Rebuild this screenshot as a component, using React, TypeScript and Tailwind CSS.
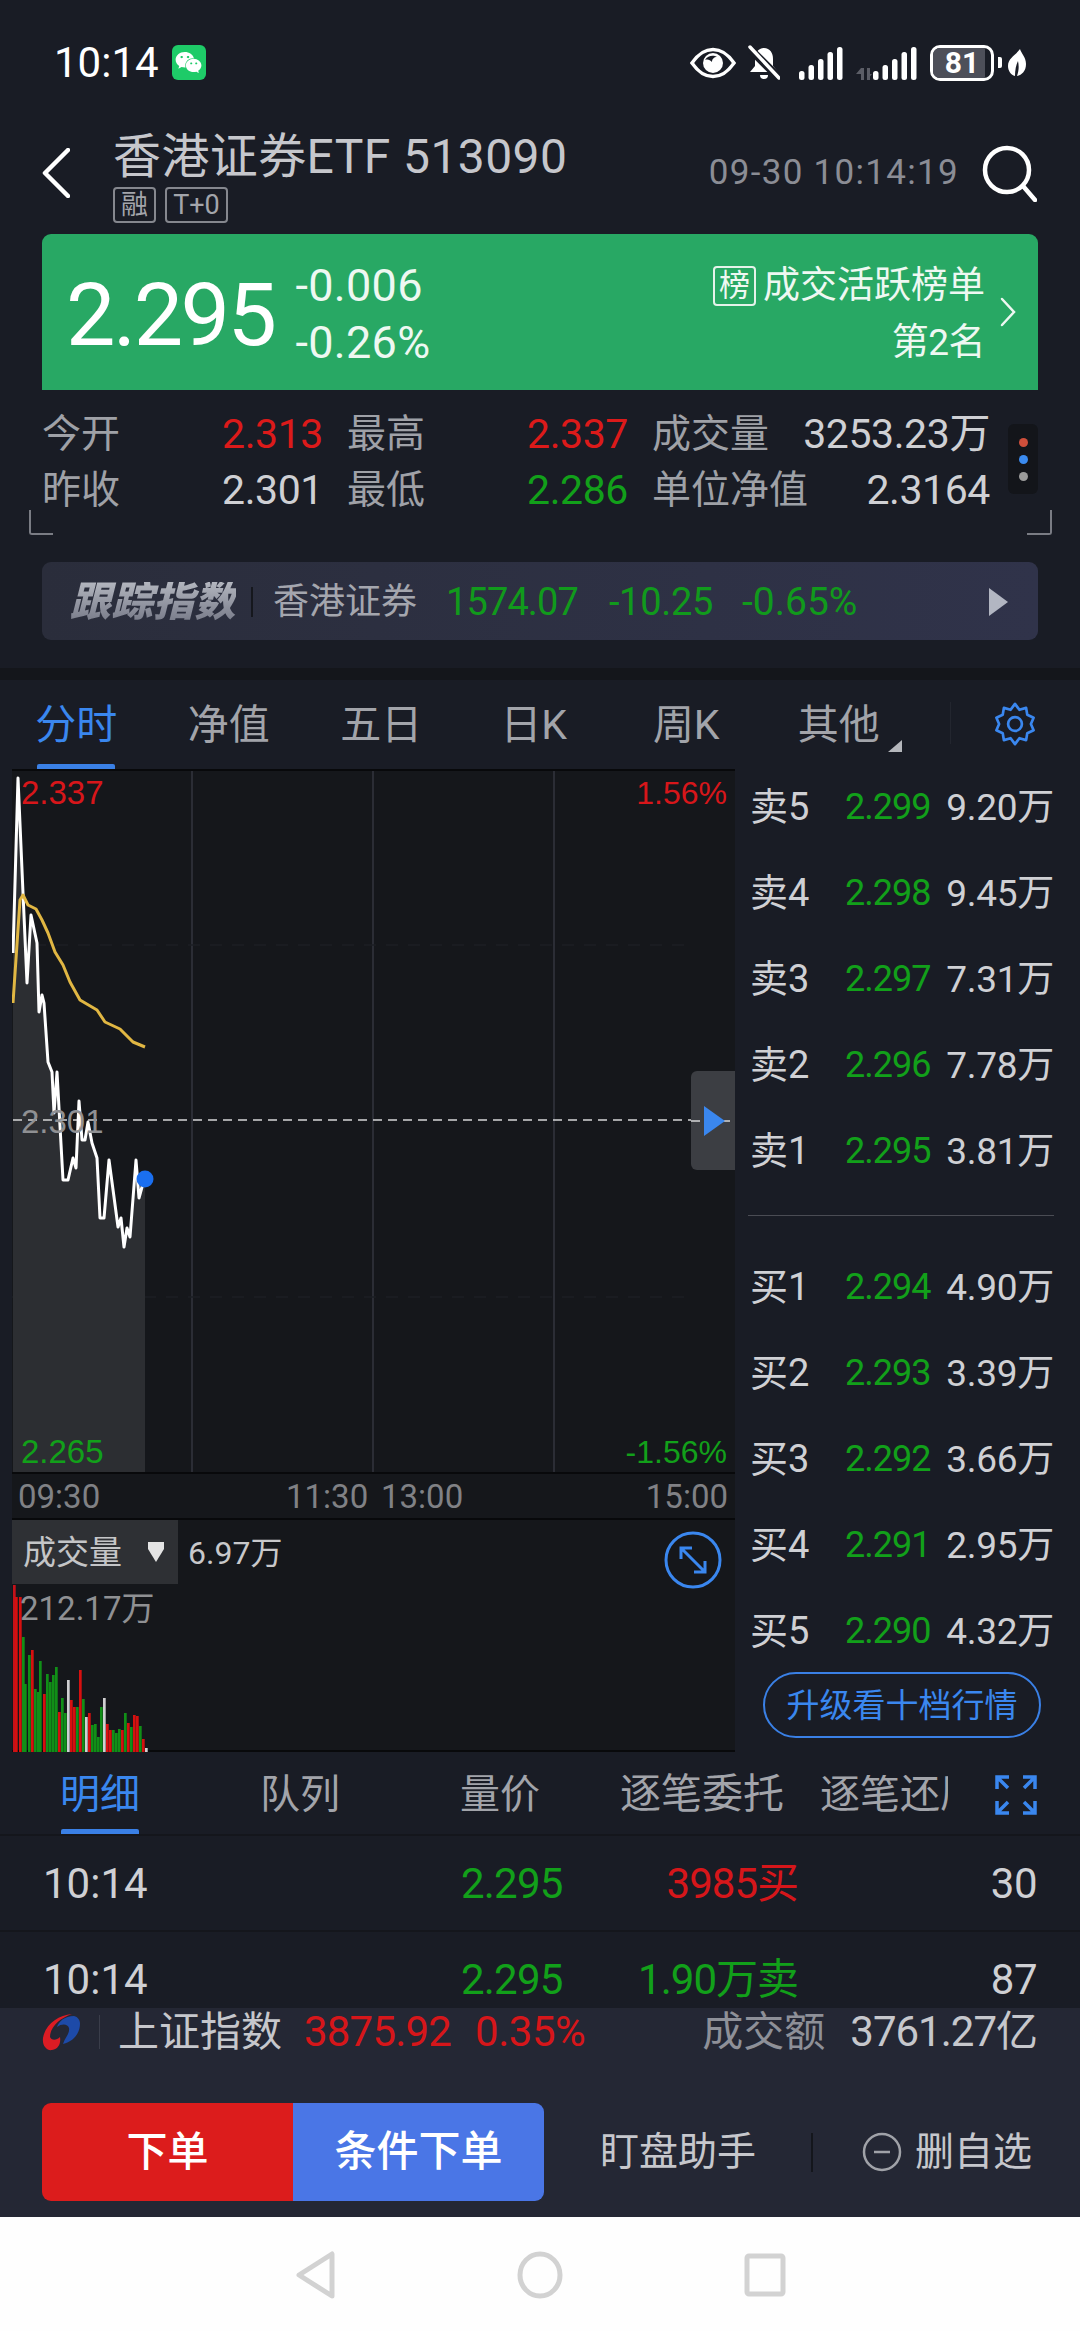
import React from 'react';
import { FaWeixin } from 'react-icons/fa';

// --- data ---
const sells = [
  ['卖5', '2.299', '9.20万'],
  ['卖4', '2.298', '9.45万'],
  ['卖3', '2.297', '7.31万'],
  ['卖2', '2.296', '7.78万'],
  ['卖1', '2.295', '3.81万'],
];
const buys = [
  ['买1', '2.294', '4.90万'],
  ['买2', '2.293', '3.39万'],
  ['买3', '2.292', '3.66万'],
  ['买4', '2.291', '2.95万'],
  ['买5', '2.290', '4.32万'],
];
const topTabs = ['分时', '净值', '五日', '日K', '周K', '其他'];

const whiteLine =
  '13,953 18,778 23,893 27,983 31,915 37,943 39,1012 42,995 44,1003 48,1062 52,1072 54,1113 57,1072 63,1180 68,1180 73,1158 76,1168 79,1101 82,1140 85,1140 88,1122 92,1143 97,1158 100,1218 104,1218 109,1160 114,1197 118,1227 121,1218 124,1247 127,1228 130,1237 136,1160 139,1198 142,1187 145,1179';
const yellowLine =
  '13,1003 20,900 23,895 28,905 36,909 42,920 48,933 55,952 63,965 70,982 80,1000 97,1010 105,1022 120,1029 133,1042 145,1047';

const G = '#e0e0e0';
// x, top of the bar (page px), colour
const bars: [number, number, string][] = [
  [13, 1583, '#c4121a'], [15, 1595, '#d6100f'], [19, 1595, '#d6100f'], [22, 1635, '#118f17'], [24, 1682, '#118f17'],
  [28, 1653, '#118f17'], [31, 1648, '#d6100f'], [34, 1687, '#118f17'], [37, 1690, '#118f17'], [39, 1659, '#118f17'],
  [43, 1692, '#d6100f'], [46, 1672, '#118f17'], [49, 1680, '#118f17'], [52, 1673, '#118f17'], [55, 1665, '#118f17'],
  [58, 1710, '#d6100f'], [61, 1696, '#118f17'], [64, 1711, '#118f17'], [67, 1678, G], [70, 1698, '#d6100f'],
  [73, 1705, '#d6100f'], [76, 1705, '#118f17'], [79, 1668, '#d6100f'], [82, 1697, '#118f17'], [85, 1715, G],
  [88, 1711, '#d6100f'], [91, 1723, '#118f17'], [94, 1722, '#118f17'], [97, 1735, '#118f17'], [100, 1705, '#118f17'],
  [103, 1696, G], [106, 1722, '#d6100f'], [109, 1728, '#d6100f'], [112, 1728, '#118f17'], [115, 1731, '#118f17'],
  [118, 1727, '#118f17'], [121, 1728, '#d6100f'], [124, 1711, '#118f17'], [127, 1721, '#d6100f'], [130, 1725, '#118f17'],
  [133, 1713, '#d6100f'], [136, 1714, '#d6100f'], [139, 1724, '#118f17'], [142, 1737, '#d6100f'], [145, 1746, G],
];

// --- status bar ---
function SignalBars({ withData }: { withData?: boolean }) {
  const heights = [9, 15, 21, 28, 33];
  return (
    <svg width={withData ? 62 : 44} height="34" viewBox={withData ? '-18 0 62 34' : '0 0 44 34'}>
      {withData && (
        <g fill="#5b5d66">
          <rect x="-12" y="22" width="3" height="12" />
          <path d="M-12 22l-5 6h5zM-6 34l5-6h-5z" />
          <rect x="-6" y="22" width="3" height="12" />
        </g>
      )}
      {heights.map((h, i) => (
        <rect key={i} x={i * 9.5} y={34 - h} width="5.5" height={h} rx="2.5" fill="#fff" />
      ))}
    </svg>
  );
}

function StatusBar() {
  return (
    <div className="h-[122px] flex items-center pl-[54px] pt-[3px]">
      <span className="text-[42px] leading-none text-white">10:14</span>
      <div className="ml-[13px] w-[34px] h-[35px] rounded-[6px] bg-[#1ecb68] flex items-center justify-center">
        <FaWeixin className="text-white text-[27px]" />
      </div>
      <div className="ml-auto mr-[54px] flex items-center">
        {/* eye */}
        <svg width="46" height="32" viewBox="0 0 46 32" fill="none">
          <path d="M2 16C9 6 15 2.500 23 2.500S37 6 44 16C37 26 31 29.500 23 29.500S9 26 2 16z" stroke="#fff" strokeWidth="3.500" />
          <circle cx="23" cy="16" r="10" fill="#fff" />
          <path d="M15 13c3-5 9-5 12-3-3 0-5 2-5 5-2-2-4-3-7-2z" fill="#191c25" />
        </svg>
        {/* muted bell */}
        <svg className="ml-[12px]" width="32" height="36" viewBox="0 0 32 36">
          <path d="M16 3c-6 0-9 5-9 11v7l-5 6h28l-5-6v-7c0-6-3-11-9-11z" fill="#fff" />
          <path d="M12 30a4 4 0 0 0 8 0z" fill="#fff" />
          <path d="M1 3l30 30" stroke="#191c25" strokeWidth="8" />
          <path d="M2 2l29 31" stroke="#fff" strokeWidth="3.500" strokeLinecap="round" />
        </svg>
        <div className="ml-[19px]"><SignalBars /></div>
        <div className="ml-[12px]"><SignalBars withData /></div>
        {/* battery */}
        <div className="ml-[13px] relative w-[64px] h-[36px] rounded-[10px] border-[3px] border-white overflow-hidden">
          <div className="h-full w-[52px] bg-[#4d4f59]" />
          <span className="absolute inset-0 flex items-center justify-center text-[30px] leading-none font-bold text-white">81</span>
        </div>
        <div className="ml-[4px] w-[4px] h-[11px] rounded-r-[2px] bg-white" />
        <svg className="ml-[6px]" width="18" height="28" viewBox="0 0 18 28">
          <path d="M12 0c1 4 6 8 6 15 0 7-4 11-9 12 2-6 2-10 1-15-2 4-3 9-3 15C3 26 0 22 0 17 0 9 8 6 12 0z" fill="#fff" />
        </svg>
      </div>
    </div>
  );
}

// --- stock header ---
function Header() {
  return (
    <div className="h-[112px] flex pl-[42px] pr-[43px]">
      <svg className="mt-[26px]" width="28" height="50" viewBox="0 0 28 50" fill="none">
        <path d="M26 2L3 25l23 23" stroke="#fff" strokeWidth="4.500" strokeLinecap="round" strokeLinejoin="round" />
      </svg>
      <div className="ml-[43px] pt-[12px]">
        <div className="text-[48px] leading-[46px] text-[#c6c7cc] tracking-[0.4px] whitespace-nowrap">香港证券ETF 513090</div>
        <div className="mt-[7px] flex gap-[9px] text-[#a3a5ab]">
          <span className="w-[43px] h-[36px] border-2 border-[#85878e] rounded-[4px] flex items-center justify-center text-[27px] leading-none">融</span>
          <span className="w-[63px] h-[36px] border-2 border-[#85878e] rounded-[4px] flex items-center justify-center text-[27px] leading-none">T+0</span>
        </div>
      </div>
      <div className="ml-auto mt-[34px] h-[34px] text-[35px] leading-[34px] tracking-[1.300px] text-[#8b8d95] whitespace-nowrap">09-30 10:14:19</div>
      <svg className="ml-[22px] mt-[22px]" width="56" height="58" viewBox="0 0 56 58" fill="none">
        <circle cx="26" cy="26" r="22" stroke="#fff" strokeWidth="4.500" />
        <path d="M42 42l12 14" stroke="#fff" strokeWidth="4.500" strokeLinecap="round" />
      </svg>
    </div>
  );
}

function PriceBanner() {
  return (
    <div className="mx-[42px] h-[156px] bg-[#28a864] rounded-t-[9px] flex text-[#eef8f2]">
      <div className="ml-[24px] mt-[37px] text-[88px] leading-[87px] tracking-[-2.500px] text-white">2.295</div>
      <div className="ml-[21px] pt-[23px] text-[45px] leading-[57px] tracking-[0.3px]">
        <div>-0.006</div>
        <div>-0.26%</div>
      </div>
      <div className="ml-auto pt-[23px] text-[37px] leading-[57px] text-right">
        <div className="flex items-center">
          <span className="w-[43px] h-[40px] border-2 border-[#e5f3ea] rounded-[4px] flex items-center justify-center text-[31px] leading-none mr-[7px]">榜</span>
          成交活跃榜单
        </div>
        <div className="tracking-[-0.5px]">第2名</div>
      </div>
      <svg className="ml-[15px] mr-[21px] mt-[63px]" width="17" height="30" viewBox="0 0 17 30" fill="none">
        <path d="M2 2l12 13L2 28" stroke="#eef8f2" strokeWidth="2.500" strokeLinecap="round" />
      </svg>
    </div>
  );
}

function StatPair({ label, value, cls, w }: { label: string; value: string; cls: string; w: string }) {
  return (
    <div className={`flex justify-between items-center ${w}`}>
      <span className="text-[39px] leading-none text-[#9fa1a7]">{label}</span>
      <span className={`text-[41px] leading-none tracking-[-0.4px] ${cls}`}>{value}</span>
    </div>
  );
}

function Stats() {
  return (
    <div className="relative h-[172px] pl-[42px] pt-[16px]">
      <div className="flex gap-[24px] h-[56px]">
        <StatPair label="今开" value="2.313" cls="text-[#dc1a1a]" w="w-[281px]" />
        <StatPair label="最高" value="2.337" cls="text-[#dc1a1a]" w="w-[281px]" />
        <StatPair label="成交量" value="3253.23万" cls="text-[#cfd0d4]" w="w-[338px]" />
      </div>
      <div className="flex gap-[24px] h-[56px]">
        <StatPair label="昨收" value="2.301" cls="text-[#cfd0d4]" w="w-[281px]" />
        <StatPair label="最低" value="2.286" cls="text-[#12a01a]" w="w-[281px]" />
        <StatPair label="单位净值" value="2.3164" cls="text-[#cfd0d4]" w="w-[338px]" />
      </div>
      {/* page dots */}
      <div className="absolute left-[1008px] top-[34px] w-[30px] h-[70px] rounded-[6px] bg-[#13151a] flex flex-col items-center justify-center gap-[8px]">
        <span className="w-[9px] h-[9px] rounded-full bg-[#cf4f3b]" />
        <span className="w-[9px] h-[9px] rounded-full bg-[#3b8bf0]" />
        <span className="w-[9px] h-[9px] rounded-full bg-[#9b9b9b]" />
      </div>
      {/* fold corners */}
      <div className="absolute left-[29px] top-[120px] w-[24px] h-[25px] border-l-2 border-b-2 border-[#7a7c84] rounded-bl-[3px]" />
      <div className="absolute left-[1027px] top-[120px] w-[25px] h-[25px] border-r-2 border-b-2 border-[#7a7c84] rounded-br-[3px]" />
    </div>
  );
}

function TrackBar() {
  return (
    <div className="mx-[42px] h-[78px] rounded-[9px] bg-gradient-to-r from-[#2a2d3b] to-[#30334a] flex items-center pl-[28px] pt-[2px]">
      <span className="text-[41px] leading-none font-black italic tracking-[0.5px] bg-clip-text text-transparent bg-gradient-to-b from-[#b3b6bf] to-[#777a88] whitespace-nowrap">跟踪指数</span>
      <span className="ml-[15px] w-[2px] h-[30px] bg-[#15171d]" />
      <span className="ml-[20px] text-[36px] leading-none text-[#a4a6ae] whitespace-nowrap">香港证券</span>
      <span className="ml-[29px] text-[38px] leading-none tracking-[-0.9px] text-[#119a1c]">1574.07</span>
      <span className="ml-[31px] text-[38px] leading-none tracking-[-0.3px] text-[#119a1c]">-10.25</span>
      <span className="ml-[29px] text-[39px] leading-none text-[#119a1c]">-0.65%</span>
      <svg className="ml-auto mr-[30px]" width="19" height="28" viewBox="0 0 19 28">
        <path d="M0 0l19 14L0 28z" fill="#b2b6c2" />
      </svg>
    </div>
  );
}

function ChartTabs() {
  return (
    <div className="h-[89px] flex items-center relative">
      {topTabs.map((t, i) => (
        <div key={t} className={`w-[152.500px] text-center text-[41px] leading-none pt-[1px] ${i === 0 ? 'text-[#3a87ef]' : 'text-[#a2a4aa]'}`}>
          {t}
        </div>
      ))}
      <div className="absolute left-[37px] bottom-[0px] w-[78px] h-[5px] rounded-t-[2px] bg-[#3a80e6]" />
      <div className="absolute left-[888px] top-[60px] w-0 h-0 border-l-[14px] border-l-transparent border-b-[12px] border-b-[#b5b7bc]" />
      <span className="absolute left-[950px] top-[22px] w-[1px] h-[42px] bg-[#23262f]" />
      <svg className="absolute left-[992px] top-[20px]" width="46" height="48" viewBox="0 0 24 24" fill="none" stroke="#3a87ef" strokeWidth="1.400" strokeLinejoin="round">
        <path d="M12 1.500l2.300 3.100 3.500-1 .6 3.600 3.300 1.500-1.400 3.300 1.400 3.300-3.300 1.500-.6 3.600-3.500-1L12 22.500l-2.300-3.100-3.500 1-.6-3.600-3.300-1.500L3.700 12 2.300 8.700l3.300-1.500.6-3.600 3.500 1z" />
        <circle cx="12" cy="12" r="3.600" />
      </svg>
    </div>
  );
}

// --- price chart, svg coordinates are page coordinates ---
function PriceChart() {
  return (
    <div className="relative h-[703px] bg-[#15171b] border-t-2 border-[#08090b]">
      <svg className="absolute left-0 top-[-2px]" width="723" height="703" viewBox="12 769 723 703" fill="none">
        <path d="M192 771V1472M373 771V1472M554 771V1472" stroke="#2b2d35" strokeWidth="2" />
        <path d="M12 945H691M12 1297H691" stroke="#1d1f24" strokeWidth="1.500" strokeDasharray="12 10" />
        <polygon points={`${whiteLine} 145,1472 13,1472`} fill="#2c2e32" />
        <path d="M13 1120H735" stroke="#d5d6d8" strokeWidth="1.500" strokeDasharray="9 6" />
        <polyline points={whiteLine} stroke="#fff" strokeWidth="3" strokeLinejoin="round" />
        <polyline points={yellowLine} stroke="#e1b743" strokeWidth="3" strokeLinejoin="round" />
        <circle cx="145" cy="1179" r="8.500" fill="#1a6ff0" />
      </svg>
      <span className="absolute left-[9px] top-[4px] font-['Liberation_Sans',sans-serif] text-[33px] leading-[36px] text-[#d7161a]">2.337</span>
      <span className="absolute right-[8px] top-[4px] font-['Liberation_Sans',sans-serif] text-[32px] leading-[36px] text-[#d7161a]">1.56%</span>
      <span className="absolute left-[9px] top-[333px] font-['Liberation_Sans',sans-serif] text-[33px] leading-[36px] text-[#8f9093]">2.301</span>
      <span className="absolute left-[9px] top-[663px] font-['Liberation_Sans',sans-serif] text-[33px] leading-[36px] text-[#12a01a]">2.265</span>
      <span className="absolute right-[8px] top-[663px] font-['Liberation_Sans',sans-serif] text-[32px] leading-[36px] text-[#12a01a]">-1.56%</span>
      {/* side handle */}
      <div className="absolute right-0 top-[300px] w-[44px] h-[99px] rounded-l-[6px] bg-[#3c3e43] flex items-center justify-center">
        <svg width="44" height="34" viewBox="0 0 44 34">
          <path d="M0 17h44" stroke="#d5d6d8" strokeWidth="1.500" strokeDasharray="9 6" />
          <path d="M13 2l21 15-21 15z" fill="#3a87ef" />
        </svg>
      </div>
    </div>
  );
}

function VolumePanel() {
  return (
    <div className="relative h-[234px] bg-[#15171b] border-t-2 border-[#08090b] border-b-2">
      <div className="h-[64px] w-[166px] bg-[#2e3034] flex items-center pl-[11px] text-[33px] leading-none text-[#c4c5c7]">
        成交量
        <svg className="ml-[25px]" width="18" height="22" viewBox="0 0 18 22">
          <path d="M1 1h16v7l-8 13-8-13z" fill="#e4e4e4" />
        </svg>
      </div>
      <span className="absolute left-[176px] top-[17px] text-[32px] leading-none text-[#c8c8ca]">6.97万</span>
      <svg className="absolute left-[652px] top-[11px]" width="58" height="58" viewBox="0 0 58 58" fill="none" stroke="#3a87ef" strokeWidth="3">
        <circle cx="29" cy="29" r="27" />
        <path d="M17 17l24 24M17 28V17h11M41 30v11H30" />
      </svg>
      <svg className="absolute left-0 top-[63px]" width="160" height="169" viewBox="12 1581 160 169">
        {bars.map(([x, top, c], i) => (
          <rect key={i} x={x} y={top} width="2.700" height={1750 - top} fill={c === G ? '#cfcfd1' : c} />
        ))}
      </svg>
      <span className="absolute left-[8px] top-[72px] text-[33px] leading-none text-[#8f9093]">212.17万</span>
    </div>
  );
}

function BookRow({ row }: { row: string[] }) {
  return (
    <div className="h-[72px] flex items-center">
      <span className="w-[95px] text-[38px] leading-none text-[#cfd0d4] whitespace-nowrap">{row[0]}</span>
      <span className="w-[85px] text-[36px] leading-none tracking-[-1px] text-[#12a01a]">{row[1]}</span>
      <span className="flex-1 text-right text-[37px] leading-none tracking-[-0.3px] text-[#cfd0d4] whitespace-nowrap">{row[2]}</span>
    </div>
  );
}

function OrderBook() {
  return (
    <div className="w-[345px] pl-[15px] pr-[26px] pt-[2px]">
      <div className="flex flex-col gap-[14px]">
        {sells.map((r) => <BookRow key={r[0]} row={r} />)}
      </div>
      <div className="mt-[28px] ml-[-2px] h-[1px] bg-[#4a4c54]" />
      <div className="mt-[35px] flex flex-col gap-[14px]">
        {buys.map((r) => <BookRow key={r[0]} row={r} />)}
      </div>
      <div className="mt-[5px] ml-[13px] w-[278px] h-[66px] rounded-full border-2 border-[#3a80e6] flex items-center justify-center text-[33px] leading-none text-[#3a87ef] whitespace-nowrap">
        升级看十档行情
      </div>
    </div>
  );
}

function DetailTabs() {
  return (
    <div className="relative h-[84px] flex items-center pt-[3px] border-b-2 border-[#14161c]">
      <div className="w-[200px] text-center text-[40px] leading-none text-[#3a87ef]">明细</div>
      <div className="w-[200px] text-center text-[40px] leading-none text-[#a2a4aa]">队列</div>
      <div className="w-[200px] text-center text-[40px] leading-none text-[#a2a4aa]">量价</div>
      <div className="w-[204px] text-center text-[41px] leading-none text-[#a2a4aa]">逐笔委托</div>
      <div className="ml-[16px] w-[128px] overflow-hidden whitespace-nowrap text-[40px] leading-none text-[#a2a4aa]">逐笔还原</div>
      <svg className="ml-[47px]" width="42" height="40" viewBox="0 0 42 40" fill="none" stroke="#3a87ef" strokeWidth="3.500">
        <path d="M2 14V2h12M2 2l11 11M40 14V2H28M40 2L29 13M2 26v12h12M2 38l11-11M40 26v12H28M40 38L29 27" />
      </svg>
      <div className="absolute left-[61px] bottom-0 w-[78px] h-[5px] rounded-t-[2px] bg-[#3a80e6]" />
    </div>
  );
}

function TradeRow({ qty, qtyCls, last }: { qty: string; qtyCls: string; last: string }) {
  return (
    <div className="h-[96px] flex items-center pl-[43px] pr-[43px] pt-[2px] border-b-2 border-[#14161c] text-[42px] leading-none">
      <span className="w-[418px] text-[#cfd0d4]">10:14</span>
      <span className="w-[101px] text-[#12a01a] tracking-[-0.8px]">2.295</span>
      <span className={`w-[236px] text-right tracking-[-1px] ${qtyCls}`}>{qty}</span>
      <span className="flex-1 text-right text-[#cfd0d4] tracking-[-0.5px]">{last}</span>
    </div>
  );
}

function Footer() {
  return (
    <div className="h-[209px] bg-[#242734]">
      <div className="h-[48px] flex items-center pl-[42px] pr-[43px]">
        <svg width="40" height="38" viewBox="0 0 40 38">
          <path d="M30 1C16 2 3 12 1 25c-1 8 4 13 9 12 7-1 9-7 8-13-4 4-9 3-10 0C8 14 18 5 30 1z" fill="#dc1c24" />
          <path d="M32 3c-9 0-15 5-17 11 5-4 11-3 12 1 1 6-4 9-6 16 10-2 17-11 17-20 0-4-2-7-6-8z" fill="#1d4aa8" />
        </svg>
        <span className="ml-[17px] w-[1px] h-[34px] bg-[#3a3d4a]" />
        <span className="ml-[18px] text-[41px] leading-none text-[#c6c7cc]">上证指数</span>
        <span className="ml-[22px] text-[42px] leading-none tracking-[-0.8px] text-[#d6161a]">3875.92</span>
        <span className="ml-[24px] text-[42px] leading-none tracking-[-0.5px] text-[#d6161a]">0.35%</span>
        <span className="ml-auto text-[41px] leading-none text-[#8e9098]">成交额</span>
        <span className="ml-[25px] text-[42px] leading-none tracking-[-1px] text-[#c6c7cc]">3761.27亿</span>
      </div>
      <div className="mt-[47px] flex items-center pl-[42px]">
        <div className="w-[251px] h-[98px] rounded-l-[9px] bg-[#dc1c1c] flex items-center justify-center text-[41px] font-medium leading-none text-white">下单</div>
        <div className="w-[251px] h-[98px] rounded-r-[9px] bg-[#4a76e6] flex items-center justify-center text-[42px] font-medium leading-none text-white">条件下单</div>
        <span className="ml-[56px] w-[156px] text-[39px] leading-none text-[#c6c7cc] whitespace-nowrap">盯盘助手</span>
        <span className="ml-[55px] w-[2px] h-[39px] bg-[#14161c]" />
        <svg className="ml-[49px]" width="40" height="40" viewBox="0 0 40 40" fill="none" stroke="#a0a2a8" strokeWidth="2.500">
          <circle cx="20" cy="20" r="18" />
          <path d="M12 20h16" />
        </svg>
        <span className="ml-[13px] text-[39px] leading-none text-[#c6c7cc] whitespace-nowrap">删自选</span>
      </div>
    </div>
  );
}

function NavBar() {
  return (
    <div className="h-[114px] bg-[#fefefe] flex justify-center pt-[33px]">
      <svg viewBox="280 2250 520 50" className="w-[520px] h-[50px]" fill="none" stroke="#d2d2d2" strokeWidth="5" strokeLinejoin="round">
        <path d="M332 2254v42l-33-21z" />
        <ellipse cx="540" cy="2275" rx="20" ry="21" />
        <rect x="747" y="2256" width="36" height="38" rx="2" />
      </svg>
    </div>
  );
}

export default function App() {
  return (
    <div className="w-[1080px] h-[2331px] overflow-hidden bg-[#191c25] font-['Roboto','Noto_Sans_CJK_SC',sans-serif]">
      <StatusBar />
      <Header />
      <PriceBanner />
      <Stats />
      <TrackBar />
      <div className="mt-[28px] h-[12px] bg-[#14161b]" />
      <ChartTabs />

      <div className="h-[983px] flex">
        <div className="ml-[12px] w-[723px]">
          <PriceChart />
          <div className="h-[46px] bg-[#15171b] border-t-2 border-[#08090b] flex items-center text-[33px] leading-none text-[#808185] relative">
            <span className="ml-[6px]">09:30</span>
            <span className="absolute left-[274px]">11:30</span>
            <span className="absolute left-[369px]">13:00</span>
            <span className="absolute right-[7px]">15:00</span>
          </div>
          <VolumePanel />
        </div>
        <OrderBook />
      </div>

      <DetailTabs />
      <div className="h-[172px] overflow-hidden">
        <TradeRow qty="3985买" qtyCls="text-[#d6161a]" last="30" />
        <TradeRow qty="1.90万卖" qtyCls="text-[#12a01a]" last="87" />
      </div>
      <Footer />
      <NavBar />
    </div>
  );
}
